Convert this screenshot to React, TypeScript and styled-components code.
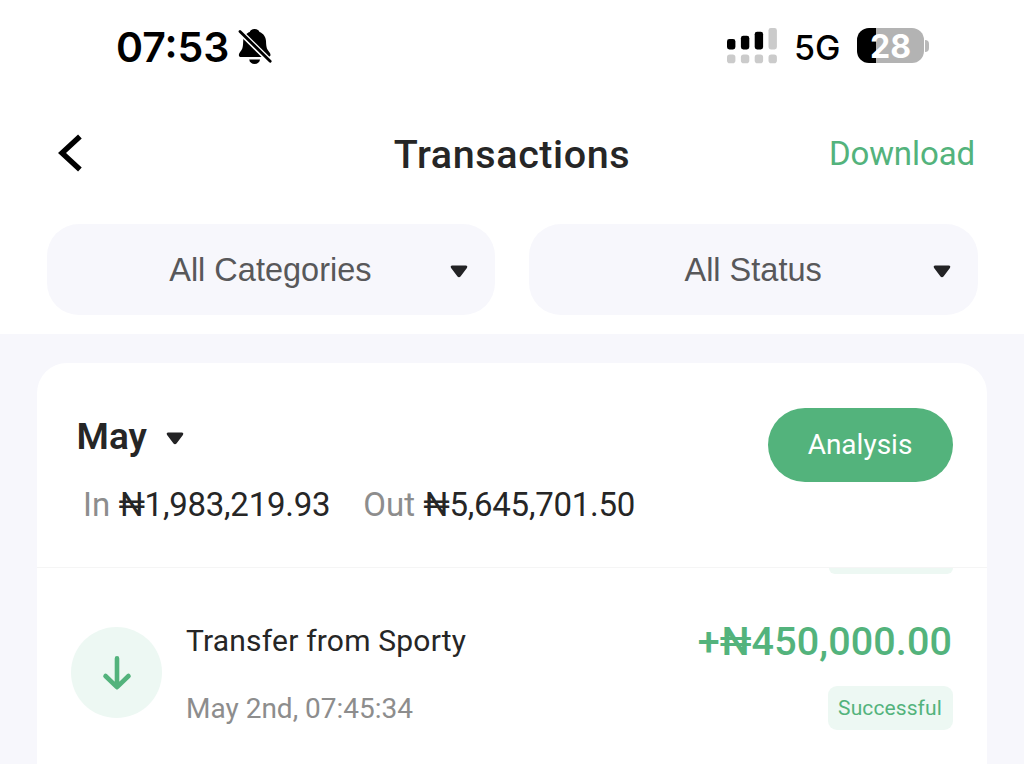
import { createGlobalStyle, styled } from "styled-components";

const colors = {
  green: "#53b37c",
  mint: "#edf8f3",
  surface: "#f7f7fc",
  dark: "#262626",
  text: "#58585a",
  muted: "#8d8d8d",
};

const FILTERS = ["All Categories", "All Status"];

const TRANSACTIONS = [
  {
    title: "Transfer from Sporty",
    date: "May 2nd, 07:45:34",
    amount: "+₦450,000.00",
    status: "Successful",
  },
];

const BellOffIcon = () => (
  <svg width="34" height="37" viewBox="0 0 34 37">
    <path
      d="M16.6 1C13.7 1 12.3 2.4 11.7 4C7.9 5.4 5.4 8.8 5.2 13C5 20 4.4 21.3 1.8 24.4C.2 26.4.6 29 3 29H30.2C32.6 29 33.2 26.4 31.6 24.4C29 21.3 28.2 20 28 13C27.8 8.8 25.3 5.4 21.5 4C20.9 2.4 19.5 1 16.6 1Z"
      fill="#000"
    />
    <path d="M11.2 31.4H22C21.6 34.2 19.4 36 16.6 36C13.8 36 11.6 34.2 11.2 31.4Z" fill="#000" />
    <path d="M-1 .8L34 35.2" stroke="#fff" strokeWidth="5.8" />
    <path d="M2 3.4L32.2 33.2" stroke="#000" strokeWidth="2.8" strokeLinecap="round" />
  </svg>
);

const SignalIcon = () => (
  <svg width="50" height="36" viewBox="0 0 50 36">
    <rect x="0" y="11" width="8.4" height="10.4" rx="2.4" />
    <rect x="13.9" y="7.8" width="8.4" height="13.6" rx="2.4" />
    <rect x="27.7" y="3.8" width="8.4" height="17.6" rx="2.4" />
    <rect x="41.5" y="0" width="8.4" height="21.4" rx="2.4" fill="#cbcbcb" />
    {[0, 13.9, 27.7, 41.5].map((x) => (
      <rect key={x} x={x} y="26.6" width="8.4" height="8.6" rx="2.8" fill="#cbcbcb" />
    ))}
  </svg>
);

const BackIcon = () => (
  <svg width="26" height="38" viewBox="0 0 26 38">
    <path d="M22.9 2.4L5 19L22.9 35.6" fill="none" stroke="#000" strokeWidth="5.4" />
  </svg>
);

const CaretIcon = () => (
  <svg width="18" height="13" viewBox="0 0 18 13">
    <path
      d="M2.2 .6H15.8C17.3 .6 17.7 2 16.9 3L10.7 11.3C9.8 12.5 8.2 12.5 7.3 11.3L1.1 3C.3 2 .7 .6 2.2 .6Z"
      fill="#232325"
    />
  </svg>
);

const ArrowDownIcon = () => (
  <svg width="30" height="36" viewBox="0 0 30 36">
    <path
      d="M15 3.4V32M3.5 21L15 32.2L26.5 21"
      fill="none"
      stroke={colors.green}
      strokeWidth="4.6"
      strokeLinecap="round"
      strokeLinejoin="round"
    />
  </svg>
);

const App = () => {
  return (
    <>
      <GlobalStyle />
      <Screen>
        <StatusBar>
          <Clock>07:53</Clock>
          <BellOffIcon />
          <Spacer />
          <SignalIcon />
          <Network>5G</Network>
          <Battery>28</Battery>
          <BatteryCap />
        </StatusBar>

        <Header>
          <BackButton aria-label="Back">
            <BackIcon />
          </BackButton>
          <Title>Transactions</Title>
          <DownloadButton>Download</DownloadButton>
        </Header>

        <Filters>
          {FILTERS.map((label) => (
            <Filter key={label}>
              <FilterLabel>{label}</FilterLabel>
              <CaretIcon />
            </Filter>
          ))}
        </Filters>

        <Content>
          <Card>
            <Summary>
              <SummaryInfo>
                <Month>
                  May
                  <CaretIcon />
                </Month>
                <Totals>
                  <TotalLabel>In</TotalLabel>
                  <TotalValue>₦1,983,219.93</TotalValue>
                  <TotalLabel $spaced>Out</TotalLabel>
                  <TotalValue>₦5,645,701.50</TotalValue>
                </Totals>
              </SummaryInfo>
              <AnalysisButton>Analysis</AnalysisButton>
            </Summary>

            <PreviousBadge />

            {TRANSACTIONS.map(({ title, date, amount, status }) => (
              <Transaction key={date}>
                <TransactionIcon>
                  <ArrowDownIcon />
                </TransactionIcon>
                <TransactionDetails>
                  <TransactionTitle>{title}</TransactionTitle>
                  <TransactionDate>{date}</TransactionDate>
                </TransactionDetails>
                <TransactionResult>
                  <Amount>{amount}</Amount>
                  <StatusBadge>{status}</StatusBadge>
                </TransactionResult>
              </Transaction>
            ))}
          </Card>
        </Content>
      </Screen>
    </>
  );
};

const GlobalStyle = createGlobalStyle`
  * {
    box-sizing: border-box;
  }

  body {
    margin: 0;
    overflow: hidden;
    background: #fff;
    font-family: Roboto, sans-serif;
  }

  button {
    margin: 0;
    padding: 0;
    border: 0;
    background: none;
    font-family: inherit;
  }

  svg {
    display: block;
    flex-shrink: 0;
  }
`;

const Screen = styled.main`
  display: flex;
  flex-direction: column;
  width: 1024px;
  height: 764px;
  overflow: hidden;
  background: #fff;
  white-space: nowrap;
`;

const StatusBar = styled.div`
  display: flex;
  align-items: center;
  flex-shrink: 0;
  height: 91px;
  padding: 0 95px 0 116px;
  font-family: Inter, sans-serif;

  & > svg:first-of-type {
    margin-top: 2px;
  }
`;

const Clock = styled.span`
  width: 122px;
  padding-top: 2px;
  font-size: 41px;
  font-weight: 600;
  line-height: 50px;
`;

const Spacer = styled.div`
  flex: 1;
`;

const Network = styled.span`
  width: 63px;
  margin-left: 17px;
  padding-top: 4px;
  font-size: 34px;
  font-weight: 500;
  line-height: 42px;
`;

const Battery = styled.div`
  display: flex;
  align-items: center;
  justify-content: center;
  width: 67px;
  height: 35px;
  padding-top: 2px;
  border-radius: 12px;
  background: linear-gradient(90deg, #000 19px, #b3b3b3 19px);
  color: #fff;
  font-size: 32px;
  font-weight: 700;
`;

const BatteryCap = styled.div`
  width: 4px;
  height: 12px;
  margin-left: 1px;
  border-radius: 0 4px 4px 0;
  background: #b9b9b9;
`;

const Header = styled.header`
  display: grid;
  grid-template-columns: 1fr auto 1fr;
  align-items: center;
  flex-shrink: 0;
  height: 124px;
  padding: 0 49px 0 57px;
`;

const BackButton = styled.button`
  justify-self: start;
`;

const Title = styled.h1`
  margin: 0 0 0 -8px;
  padding-top: 2px;
  color: ${colors.dark};
  font-size: 39.5px;
  font-weight: 550;
  letter-spacing: 0.6px;
`;

const DownloadButton = styled.button`
  justify-self: end;
  color: ${colors.green};
  font-size: 33px;
  letter-spacing: -0.1px;
`;

const Filters = styled.div`
  display: grid;
  grid-template-columns: 1fr 1fr;
  gap: 34px;
  flex-shrink: 0;
  height: 119px;
  padding: 9px 46px 19px 46.5px;
`;

const Filter = styled.button`
  display: grid;
  grid-template-columns: 1fr 45px;
  align-items: center;
  padding-left: 44px;
  border-radius: 32px;
  background: ${colors.surface};

  & > svg {
    margin-top: 4px;
  }
`;

const FilterLabel = styled.span`
  padding-top: 2px;
  color: ${colors.text};
  font-family: "Liberation Sans", sans-serif;
  font-size: 32.5px;
`;

const Content = styled.section`
  flex: 1;
  padding: 29px 37px 0;
  background: ${colors.surface};
`;

const Card = styled.div`
  height: 420px;
  border-radius: 30px 30px 0 0;
  background: #fff;
`;

const Summary = styled.div`
  display: flex;
  justify-content: space-between;
  height: 205px;
  padding: 45px 34px 0 39.5px;
  border-bottom: 1px solid #f5f5f5;
`;

const SummaryInfo = styled.div`
  display: flex;
  flex-direction: column;
  gap: 24px;
  padding-top: 7px;
`;

const Month = styled.div`
  display: flex;
  align-items: center;
  gap: 19px;
  color: ${colors.dark};
  font-size: 37px;
  font-weight: 600;
  line-height: 44px;

  & > svg {
    margin-top: 2px;
  }
`;

const Totals = styled.div`
  display: flex;
  padding-left: 6.5px;
  font-size: 33px;
  line-height: 44px;
`;

const TotalLabel = styled.span<{ $spaced?: boolean }>`
  margin-left: ${({ $spaced }) => ($spaced ? "33px" : "0")};
  margin-right: 8.5px;
  color: ${colors.muted};
`;

const TotalValue = styled.span`
  color: ${colors.dark};
  letter-spacing: -0.24px;
`;

const AnalysisButton = styled.button`
  width: 185px;
  height: 74px;
  padding: 0 1px 2px 0;
  border-radius: 37px;
  background: ${colors.green};
  color: #fff;
  font-size: 28px;
`;

const PreviousBadge = styled.div`
  width: 124px;
  height: 6px;
  margin: 0 34px 0 auto;
  border-radius: 0 0 8px 8px;
  background: ${colors.mint};
`;

const Transaction = styled.article`
  display: flex;
  padding: 47px 34px 0;
`;

const TransactionIcon = styled.div`
  display: flex;
  align-items: center;
  justify-content: center;
  width: 91px;
  height: 91px;
  margin-top: 6px;
  border-radius: 50%;
  background: ${colors.mint};
`;

const TransactionDetails = styled.div`
  display: flex;
  flex: 1;
  flex-direction: column;
  gap: 28px;
  padding-left: 24px;
  line-height: 40px;
`;

const TransactionTitle = styled.span`
  color: ${colors.dark};
  font-size: 30px;
  letter-spacing: 0.2px;
`;

const TransactionDate = styled.span`
  color: ${colors.muted};
  font-size: 28px;
`;

const TransactionResult = styled.div`
  display: flex;
  flex-direction: column;
  align-items: flex-end;
  gap: 24px;
  padding-top: 1px;
`;

const Amount = styled.span`
  margin-right: 1px;
  color: ${colors.green};
  font-size: 39.5px;
  font-weight: 500;
  letter-spacing: 0.1px;
  line-height: 40px;
`;

const StatusBadge = styled.span`
  width: 125px;
  height: 44px;
  padding-right: 1px;
  border-radius: 9px;
  background: ${colors.mint};
  color: ${colors.green};
  font-size: 21px;
  letter-spacing: 0.1px;
  line-height: 44px;
  text-align: center;
`;

export default App;
